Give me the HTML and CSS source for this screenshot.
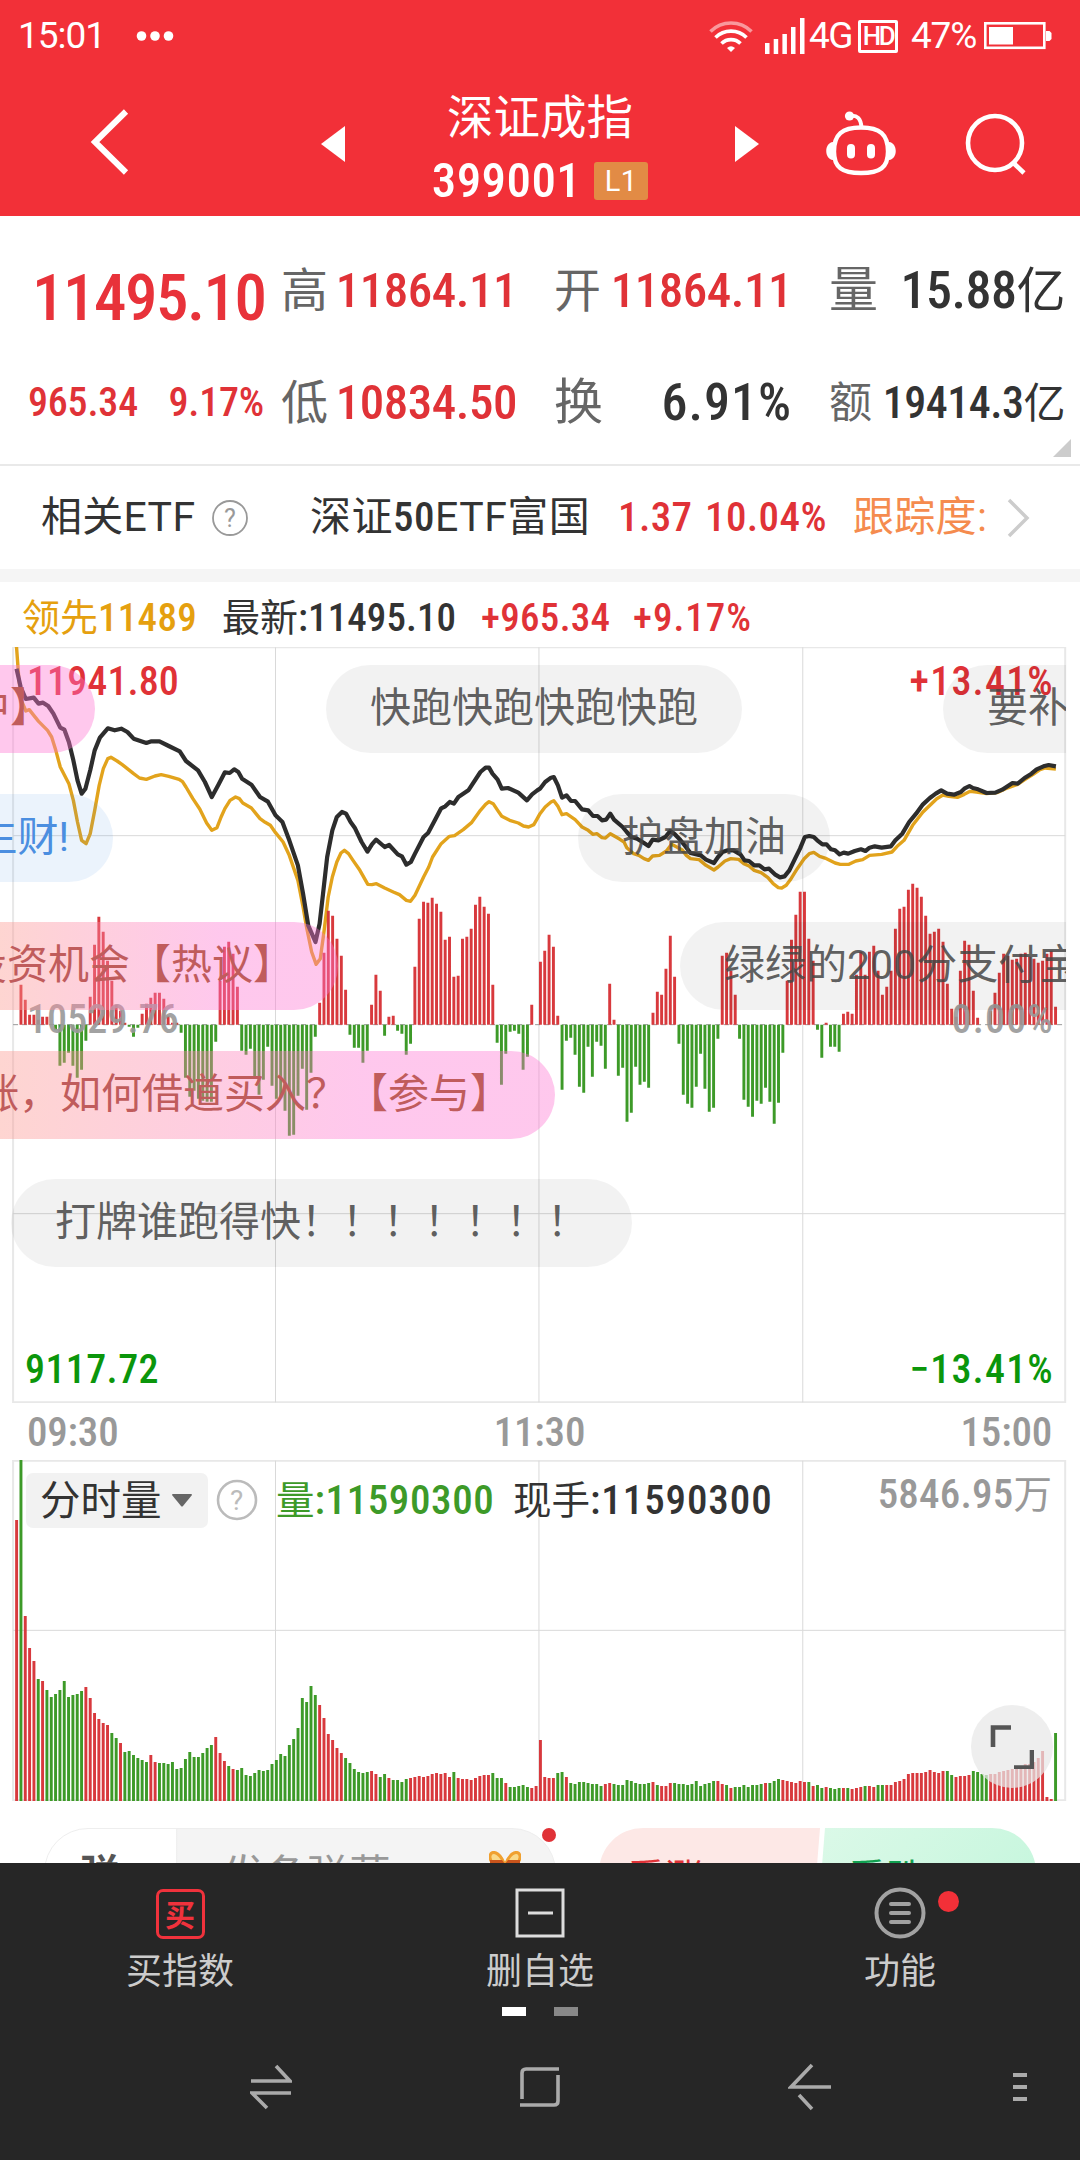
FILE: index.html
```
<!DOCTYPE html>
<html lang="zh-CN">
<head>
<meta charset="utf-8">
<title>深证成指 399001</title>
<link rel="stylesheet" href="styles.css">
</head>
<body>
<header class="header">
  <div class="status">
    <div class="status-side">
      <span class="clock">15:01</span>
      <svg width="38" height="12" viewBox="0 0 38 12" fill="#fff"><circle cx="5.5" cy="6" r="4.8"/><circle cx="19" cy="6" r="4.8"/><circle cx="32.500" cy="6" r="4.800"/></svg>
    </div>
    <div class="status-side status-right">
      <svg class="wifi" width="44" height="36" viewBox="0 0 44 36" fill="none" stroke="#fff" stroke-width="3.6">
        <path d="M1.500 13.500a29 29 0 0 1 41 0" opacity=".5"/>
        <path d="M6.500 19.500a22 22 0 0 1 31 0"/>
        <path d="M12.500 25.500a13.500 13.500 0 0 1 19 0"/>
        <path d="M18 30q4-3.500 8 0l-4 4z" fill="#fff" stroke="none"/>
      </svg>
      <svg class="signal" width="40" height="38" viewBox="0 0 40 38" fill="#fff"><path d="M0 26h4.500v11H0zM8.700 22h4.500v15H8.700zM17.400 17h4.500v20h-4.500zM26 10h4.500v27H26zM35 1h4.500v36H35z"/></svg>
      <span class="net">4G</span>
      <span class="hd">HD</span>
      <span class="percent">47%</span>
      <svg width="68" height="28" viewBox="0 0 68 28"><rect x="1.300" y="1.300" width="59" height="24.500" fill="none" stroke="#fff" stroke-width="2.600"/><path d="M5 5h24v17.500H5zM62 9h3.500l2 2v6l-2 2H62z" fill="#fff"/></svg>
    </div>
  </div>
  <nav class="titlebar">
    <svg class="back" width="40" height="66" viewBox="0 0 40 66" fill="none" stroke="#fff" stroke-width="6"><path d="M36 2.500 5 33l31 30.500"/></svg>
    <svg class="prev" width="24" height="36" viewBox="0 0 24 36"><path d="M24 0v36L0 18z" fill="#fff"/></svg>
    <div class="title">
      <h1>深证成指</h1>
      <div class="code"><span>399001</span><b class="level">L1</b></div>
    </div>
    <svg class="next" width="24" height="36" viewBox="0 0 24 36"><path d="M0 0v36l24-18z" fill="#fff"/></svg>
    <svg class="robot" width="70" height="66" viewBox="0 0 70 66" fill="none" stroke="#fff" stroke-width="4.400">
      <path d="M35 16.500c19 0 27 7 27 24 0 16-8 21.500-27 21.500S8 56.500 8 40.500c0-17 8-24 27-24z"/>
      <path d="M24 5c7-1 11 2 11.500 12" stroke-width="4"/>
      <circle cx="23.500" cy="5" r="4.600" fill="#fff" stroke="none"/>
      <path d="M7 31c-9 1-9 17 0 18zM63 31c9 1 9 17 0 18z" fill="#fff" stroke="none"/>
      <path d="M25 37v6.500M45 37v6.500" stroke-width="8" stroke-linecap="round"/>
    </svg>
    <svg class="search" width="62" height="64" viewBox="0 0 62 64" fill="none" stroke="#fff" stroke-width="4.600"><circle cx="30" cy="31" r="27"/><path d="m47.500 50 11.500 11"/></svg>
  </nav>
</header>

<section class="quote">
  <div class="cell last"><strong>11495.10</strong></div>
  <div class="cell"><label class="l47">高</label><span class="up">11864.11</span></div>
  <div class="cell"><label class="l47">开</label><span class="up">11864.11</span></div>
  <div class="cell"><label class="l49">量</label><span class="v52">15.88<i>亿</i></span></div>
  <div class="cell change"><span class="up">965.34</span><span class="up">9.17%</span></div>
  <div class="cell"><label class="l47">低</label><span class="up">10834.50</span></div>
  <div class="cell"><label class="l49">换</label><span class="v52 wide">6.91%</span></div>
  <div class="cell"><label class="l42">额</label><span class="v44">19414.3<i>亿</i></span></div>
  <svg class="corner" width="18" height="18" viewBox="0 0 18 18"><path d="M18 0v18H0z" fill="#ccc"/></svg>
</section>

<section class="etf">
  <span class="etf-title">相关<em>ETF</em></span>
  <svg class="help" width="38" height="38" viewBox="0 0 38 38"><circle cx="19" cy="19" r="17" fill="none" stroke="#999" stroke-width="1.800"/><text x="19" y="28" text-anchor="middle">?</text></svg>
  <span class="etf-name">深证<b>50</b><em>ETF</em>富国</span>
  <span class="up etf-price">1.37</span>
  <span class="up etf-rate">10.04%</span>
  <span class="track">跟踪度:</span>
  <svg class="chev" width="24" height="42" viewBox="0 0 24 42" fill="none" stroke="#ccc" stroke-width="3.500"><path d="m3 3 18 18L3 39"/></svg>
</section>

<section class="legend">
  <span class="lead"><i>领先</i>11489</span>
  <span class="latest"><i>最新</i>:11495.10</span>
  <span class="up plus">+965.34</span>
  <span class="up rate">+9.17%</span>
</section>

<section class="chart">
  <svg class="plot" id="price" width="1080" height="756" viewBox="0 20 3136 2268" preserveAspectRatio="none">
    <g class="grid">
      <path class="frame" d="M38 21H3093V2286H38z"/>
      <path d="M800 21V2286M1565 21V2286M2331 21V2286M38 586H3093M38 1720H3093"/>
      <path class="zero" d="M38 1153H3093"/>
    </g>
    <polyline class="avg" points="48,20 55,120 62,180 75,212 85,208 98,225 112,243 138,270 150,290 162,330 175,380 200,430 213,480 225,545 237,600 250,610 262,580 275,510 288,435 300,385 313,355 322,351 340,362 355,373 388,400 405,413 425,417 450,407 468,403 490,408 520,417 530,424 540,440 560,475 580,506 600,548 615,570 630,562 642,530 653,505 668,480 684,470 695,475 705,488 730,503 755,535 770,546 785,555 800,577 822,605 840,645 865,720 880,800 890,860 905,935 918,972 930,955 940,880 953,770 965,710 978,665 990,638 1000,630 1012,640 1025,660 1045,690 1068,732 1080,733 1093,730 1117,743 1142,755 1160,763 1180,780 1192,783 1205,765 1230,710 1245,680 1256,650 1281,610 1305,588 1320,586 1345,568 1370,546 1395,510 1410,492 1420,484 1432,490 1445,510 1457,528 1480,540 1505,548 1520,557 1535,560 1550,553 1560,535 1568,520 1583,500 1600,485 1608,481 1620,498 1632,523 1645,520 1670,538 1690,560 1708,570 1722,582 1733,580 1748,592 1758,593 1772,580 1785,588 1800,597 1812,605 1820,622 1840,640 1855,645 1870,655 1883,660 1895,647 1915,645 1935,632 1950,612 1965,620 1980,628 1993,645 2005,655 2030,658 2050,675 2073,689 2085,680 2105,662 2122,655 2145,657 2160,670 2175,677 2190,690 2210,697 2230,712 2245,730 2260,742 2270,743 2283,735 2297,715 2315,685 2335,655 2350,640 2363,636 2380,648 2400,655 2425,668 2440,672 2465,672 2485,662 2505,658 2525,645 2560,642 2590,635 2605,618 2625,600 2650,555 2680,515 2705,490 2720,475 2738,464 2755,468 2780,471 2800,462 2817,453 2835,455 2865,460 2895,457 2920,445 2955,432 2980,415 3000,402 3020,388 3035,383 3066,386"/>
    <polyline class="line" points="48,85 60,140 75,176 98,172 112,190 125,187 140,197 155,220 175,262 187,268 200,305 213,360 225,420 237,460 248,445 262,390 275,330 290,292 313,264 333,270 352,265 370,275 388,295 425,308 440,303 463,303 490,317 522,333 540,362 575,390 595,425 615,470 635,432 653,396 667,398 680,387 692,395 703,415 730,433 755,470 778,484 800,525 820,545 840,600 865,675 880,760 895,855 916,905 928,850 938,760 950,650 965,570 978,530 993,515 1005,520 1018,545 1030,562 1050,605 1067,634 1080,612 1092,598 1117,620 1130,614 1155,642 1167,648 1180,673 1193,665 1205,640 1230,590 1243,578 1260,545 1281,504 1293,498 1306,485 1318,490 1331,470 1360,450 1395,395 1410,382 1420,382 1430,400 1445,418 1457,445 1475,443 1505,457 1530,480 1545,462 1560,450 1568,445 1583,425 1600,412 1608,410 1620,435 1632,472 1645,465 1658,482 1670,482 1690,507 1708,510 1722,527 1735,527 1748,540 1760,538 1772,520 1783,538 1808,560 1820,575 1833,590 1850,595 1870,608 1883,617 1895,598 1912,600 1932,590 1946,572 1958,580 1975,598 1990,618 2005,638 2035,645 2050,658 2073,668 2085,650 2098,635 2113,630 2130,630 2150,642 2162,660 2175,662 2190,675 2205,675 2220,687 2233,685 2250,702 2265,711 2278,708 2292,690 2310,652 2323,625 2337,590 2350,587 2363,590 2373,600 2388,612 2400,612 2413,627 2425,630 2438,642 2450,637 2463,640 2482,632 2500,627 2513,632 2525,622 2540,618 2560,622 2587,618 2600,600 2620,580 2640,545 2660,520 2680,492 2700,473 2717,460 2733,450 2750,460 2770,463 2790,455 2800,445 2815,437 2825,443 2840,447 2865,458 2890,457 2910,448 2940,428 2955,430 2975,413 2995,400 3010,387 3030,378 3045,374 3066,378"/>
    <path class="bar-up"/><path class="bar-down"/>
  </svg>
  <span class="axis up tl">11941.80</span><span class="axis up tr">+13.41%</span>
  <span class="axis mid ml">10529.76</span><span class="axis mid mr">0.00%</span>
  <span class="axis down bl">9117.72</span><span class="axis down br">−13.41%</span>
  <div class="danmaku">
    <p class="pink r1 edge" style="width:95px">中】</p>
    <p class="grey r1" style="left:326px">快跑快跑快跑快跑</p>
    <p class="grey r1" style="left:943px">要补仓</p>
    <p class="blue r2 edge" style="width:113px">生财!</p>
    <p class="grey r2" style="left:578px">护盘加油</p>
    <p class="pink r3 edge" style="width:338px">投资机会【热议】</p>
    <p class="grey r3" style="left:680px">绿绿的200分支付宝</p>
    <p class="pink r4 edge" style="width:555px">涨，如何借道买入？【参与】</p>
    <p class="grey r5" style="left:11px">打牌谁跑得快！！！！！！！</p>
  </div>
</section>

<div class="times"><span>09:30</span><span>11:30</span><span>15:00</span></div>

<section class="volume">
  <svg class="plot" id="volume" width="1080" height="341" viewBox="0 27 3136 1023" preserveAspectRatio="none">
    <g class="grid">
      <path class="frame" d="M38 29H3093V1048H38z"/>
      <path d="M800 29V1048M1565 29V1048M2331 29V1048M38 538H3093"/>
    </g>
    <path class="bar-up"/><path class="bar-down"/>
  </svg>
  <div class="volume-head">
    <span class="select">分时量<svg width="20" height="13" viewBox="0 0 20 13"><path d="M0 1q0-1 1-1h18q1 0 1 1l-9 11q-1 1-2 0z" fill="#666"/></svg></span>
    <svg class="help2" width="42" height="42" viewBox="0 0 42 42"><circle cx="21" cy="21" r="19" fill="none" stroke="#bbb" stroke-width="2.600"/><text x="21" y="31" text-anchor="middle">?</text></svg>
    <span class="vol"><i>量</i>:11590300</span>
    <span class="now"><i>现手</i>:11590300</span>
    <span class="max">5846.95<i>万</i></span>
  </div>
  <button class="expand"><svg width="44" height="44" viewBox="0 0 44 44" fill="none" stroke="#555" stroke-width="4.600"><path d="M21 2.500H3V22M42 25v17.500H24"/></svg></button>
</section>

<section class="social">
  <div class="input"><b>弹</b><span>发条弹幕</span>
    <svg class="gift" width="32" height="34" viewBox="0 0 32 34"><path d="M15 12C10 0 2-1 1 5s6 10 14 8zM17 12C22 0 30-1 31 5s-6 10-14 8z" fill="#f9d98a" stroke="#f0a030" stroke-width="3"/><path d="M1 9h12l3 4 3-4h12v24H1z" fill="#c9541c"/></svg>
    <s class="dot"></s>
  </div>
  <div class="vote"><span class="bull">看涨 <em>710</em></span><span class="bear">看跌 <em>290</em></span></div>
</section>

<footer class="footer">
  <div class="tabs">
    <div class="tab"><span class="ico buy">买</span>买指数</div>
    <div class="tab"><svg class="ico" width="50" height="50" viewBox="0 0 50 50" fill="none" stroke="#ddd" stroke-width="3"><path d="M2 2h46v46H2zM13 25h25"/></svg>删自选</div>
    <div class="tab"><svg class="ico" width="52" height="52" viewBox="0 0 52 52" fill="none" stroke="#a2a2a2" stroke-width="4"><circle cx="26" cy="26" r="23.500"/><path d="M17 17h18M17 26h18M17 35h18" stroke-linecap="round"/></svg>功能<s class="badge"></s></div>
  </div>
  <div class="pager"><s></s><s></s></div>
  <div class="sysnav">
    <svg class="swap" width="42" height="46" viewBox="0 0 42 46"><path d="M1 17h39L26 2M41 29H2l15 15"/></svg>
    <svg class="home" width="42" height="44" viewBox="0 0 42 44"><path d="M40 4H7Q3 4 3 8v26M39 10v26q0 4-4 4H1"/></svg>
    <svg class="return" width="44" height="48" viewBox="0 0 44 48"><path d="M43 24H3L24 2M11 32l13 14"/></svg>
    <svg class="more" width="16" height="30" viewBox="0 0 16 30"><path d="M1 3h14M1 15h14M1 27h14"/></svg>
  </div>
</footer>
<script src="charts.js"></script>
</body>
</html>
```
FILE: styles.css
```
* { box-sizing: border-box; margin: 0; }
i, em, s { font-style: normal; text-decoration: none; }
body {
  width: 1080px; height: 2160px; overflow: hidden; background: #fff; color: #333;
  font: 500 40px "Roboto Condensed", "Noto Sans CJK SC", sans-serif;
  display: flex; flex-direction: column;
}
svg { display: block; flex: none; }
span, label { white-space: nowrap; }
.up { color: #e03237; }
em { font-family: Roboto, sans-serif; font-weight: 400; }

.header { height: 216px; background: #f23038; color: #fff; flex: none; }
.status { height: 72px; display: flex; justify-content: space-between; padding: 0 28px 0 18px; font: 400 37px/76px Roboto, sans-serif; }
.status-side { display: flex; align-items: center; gap: 30px; }
.clock { width: 88px; letter-spacing: -1px; }
.status-right { gap: 0; }
.wifi { margin-right: 12px; }
.signal { margin-right: 4px; }
.net { width: 49px; letter-spacing: -1.500px; }
.hd { width: 40px; height: 33px; border: 3px solid #fff; border-radius: 2px; font: 500 26px/27px Roboto, sans-serif; letter-spacing: -2.500px; text-align: center; margin-right: 13px; }
.percent { width: 73px; letter-spacing: -1.200px; }
.titlebar { height: 144px; display: flex; align-items: center; padding-left: 90px; }
.back { margin-top: -4px; margin-right: 191px; }
.prev { margin-right: 60px; }
.title { width: 270px; text-align: center; align-self: flex-start; margin-top: 12px; }
.title h1 { font: 400 46.500px/60px "Noto Sans CJK SC", sans-serif; }
.code { display: flex; justify-content: center; align-items: center; gap: 13px; margin-top: 3px; font-size: 49px; line-height: 68px; letter-spacing: .4px; }
.level { width: 54px; height: 38px; border-radius: 3px; background: #e28b45; font: 400 29px/38px Roboto, sans-serif; }
.next { margin-left: 60px; margin-right: 67px; }
.robot { margin-right: 69px; }

.quote { flex: none; height: 250px; padding: 19px 15px 0 28px; border-bottom: 2px solid #e9e9e9; position: relative; display: grid; grid-template-columns: 253px 273px 275px 236px; grid-template-rows: 112px 112px; }
.cell { display: flex; justify-content: space-between; line-height: 112px; font-size: 49px; letter-spacing: -.5px; }
.cell:nth-child(4n+1) { padding-right: 17px; }
.cell:nth-child(4n+2) { padding-right: 37px; }
.cell:nth-child(4n+3) { padding-right: 37px; }
.cell label, .cell i { font-family: "Roboto", "Noto Sans CJK SC", sans-serif; font-weight: 400; color: #666; }
.cell i { color: #333; }
.last { color: #e8323a; font-size: 65px; line-height: 126px; padding-left: 4px; letter-spacing: -1.500px; }
.last strong { font-weight: 500; }
.change { font-size: 40px; letter-spacing: -.2px; }
.l47 { font-size: 47px; } .l49 { font-size: 49px; } .l42 { font-size: 43px; }
.v52 { font-size: 52px; } .v52 i { font-size: 49px; }
.wide { letter-spacing: 1px; }
.v44 { font-size: 44px; } .v44 i { font-size: 42px; }
.corner { position: absolute; right: 9px; bottom: 7px; }

.etf { flex: none; height: 116px; border-bottom: 13px solid #f5f5f5; display: flex; align-items: center; padding-left: 41px; font-size: 41px; line-height: 105px; font-weight: 400; letter-spacing: .3px; }
.etf-title { width: 170px; }
.help { margin-right: 61px; }
.help text { font: 400 25px Roboto; fill: #999; }
.etf-name { width: 308px; letter-spacing: .5px; }
.etf-name b { font-weight: 500; }
.etf .up { font-weight: 500; letter-spacing: .4px; }
.etf-price { width: 87px; } .etf-rate { width: 148px; }
.track { color: #f58b4e; width: 153px; }

.legend { flex: none; height: 65px; display: flex; padding-left: 22px; font-size: 39px; line-height: 72px; letter-spacing: .3px; }
.legend i { font-weight: 400; font-size: 38px; letter-spacing: 0; }
.lead { color: #e5a00f; width: 200px; }
.latest { width: 259px; letter-spacing: .1px; }
.plus { width: 152px; }
.rate { letter-spacing: 1px; }

.chart { flex: none; height: 756px; position: relative; }
.grid path { fill: none; stroke: #d9d9d9; stroke-width: 1; vector-effect: non-scaling-stroke; }
.grid .frame { stroke: #e8e8e8; stroke-width: 2; }
.grid .zero { stroke: #999; stroke-dasharray: 5 4; }
.avg, .line { fill: none; vector-effect: non-scaling-stroke; stroke-linejoin: round; }
.avg { stroke: #e2a31c; stroke-width: 3.400; }
.line { stroke: #2d2d2d; stroke-width: 4.200; }
.bar-up { fill: #d8393d; } .bar-down { fill: #3d9a28; }
.axis { position: absolute; font-size: 40px; line-height: 48px; letter-spacing: .1px; }
.tl, .tr { top: 11px; } .ml, .mr { top: 349px; } .bl, .br { top: 699px; }
.tl, .ml { left: 27px; } .bl { left: 25px; letter-spacing: .4px; } .tr, .mr, .br { right: 26px; letter-spacing: 1.200px; }
.mid { color: #999; opacity: .9; } .down { color: #0b960b; }
.danmaku { position: absolute; left: 0; top: 0; width: 1066px; height: 100%; overflow: hidden; font: 400 41px/87px Roboto, "Noto Sans CJK SC", sans-serif; }
.danmaku p { position: absolute; height: 88px; border-radius: 44px; padding: 0 44px; white-space: nowrap; }
.danmaku .edge { left: 0; border-radius: 0 44px 44px 0; display: flex; justify-content: flex-end; overflow: hidden; }
.grey { background: rgba(0, 0, 0, .052); color: rgba(70, 70, 70, .85); }
.blue { background: rgba(60, 140, 230, .1); color: #4b8ee0; }
.pink { background: linear-gradient(90deg, rgba(252, 150, 140, .4), rgba(254, 117, 210, .4) 65%); color: #c05c5c; }
.pink.r1 { background: rgba(254, 117, 210, .4); }
.r1 { top: 18px; } .r2 { top: 146.500px; } .r3 { top: 275px; } .r4 { top: 404px; } .r5 { top: 532px; }

.times { flex: none; height: 57px; display: grid; grid-template-columns: 1fr auto 1fr; padding: 0 28px 0 27px; color: #999; font-size: 41px; line-height: 58px; letter-spacing: -.2px; }
.times span:last-child { text-align: right; }

.volume { flex: none; height: 341px; position: relative; }
.volume-head { position: absolute; inset: 0 28px auto 26px; display: flex; padding-top: 13px; font-size: 41px; line-height: 54px; letter-spacing: .6px; }
.volume-head i { font-weight: 400; letter-spacing: 0; font-size: 38.500px; }
.select { display: flex; align-items: center; gap: 10px; width: 182px; height: 55px; padding-left: 14px; background: #f2f2f2; border-radius: 7px; font-weight: 400; font-size: 40.500px; letter-spacing: 0; }
.help2 { margin: 6px 18px 0 8px; }
.help2 text { font: 400 28px Roboto; fill: #bbb; }
.vol { color: #3d9a28; width: 237px; }
.now { letter-spacing: .9px; }
.max { margin-left: auto; color: #999; line-height: 42px; letter-spacing: .2px; }
.expand { position: absolute; left: 971px; top: 245px; width: 82px; height: 83px; border: 0; padding: 0; border-radius: 50%; background: rgba(232, 232, 232, .72); display: grid; place-items: center; }

.social { flex: none; height: 62px; overflow: hidden; padding: 27px 44px 0; display: flex; justify-content: space-between; }
.input { width: 512px; height: 88px; border: 1px solid #eee; border-radius: 44px; display: flex; position: relative; background: linear-gradient(90deg, #fff 131px, #eee 131px, #f4f4f4 133px); font: 400 42px/86px "Noto Sans CJK SC"; color: #999; }
.input b { width: 178px; padding-left: 35px; color: #555; font-size: 40px; font-weight: 700; line-height: 84px; }
.gift { position: absolute; left: 444px; top: 22px; }
.dot { position: absolute; left: 497px; top: -1px; width: 14px; height: 14px; border-radius: 50%; background: #e03237; }
.vote { width: 437px; height: 88px; border-radius: 44px; overflow: hidden; display: flex; font: 400 38px/94px "Noto Sans CJK SC"; position: relative; background: #fff; }
.vote span { clip-path: polygon(0 0, 100% 0, calc(100% - 7px) 100%, 0 100%); }
.vote em { font: 500 38px "Roboto Condensed"; margin-left: 4px; }
.bull { width: 221px; padding-left: 28px; background: #fde8e6; color: #e03237; }
.vote .bear { flex: 1; margin-left: -2px; padding-left: 30px; background: linear-gradient(135deg, #dbf9e8, #c4f6dc); color: #10a050; clip-path: polygon(7px 0, 100% 0, 100% 100%, 0 100%); }

.footer { flex: none; height: 297px; background: #262626; color: #ccc; }
.tabs { height: 144px; display: grid; grid-template-columns: repeat(3, 1fr); font: 400 36px/52px "Noto Sans CJK SC", sans-serif; }
.tab { display: flex; flex-direction: column; align-items: center; padding-top: 24px; position: relative; }
.ico { height: 52px; margin-bottom: 3px; }
.buy { width: 49px; height: 50px; margin: 2px 0 3px; border: 3px solid #f0323c; border-radius: 7px; color: #f0323c; font-size: 30px; line-height: 42px; text-align: center; font-weight: 700; display: flex; justify-content: center; }
.badge { position: absolute; left: 218px; top: 28px; width: 21px; height: 21px; border-radius: 50%; background: #f23038; }
.pager { display: flex; justify-content: center; gap: 28px; }
.pager s { width: 24px; height: 9px; background: #fff; }
.pager s + s { background: #888; }
.sysnav { display: grid; grid-template-columns: 250px 269px 269px 224px 16px; align-items: center; height: 142px; }
.sysnav svg { fill: none; stroke: #aaa; stroke-width: 3.600; }
.sysnav .swap { grid-column: 2; }
.sysnav .more { stroke-width: 4; }
```
FILE: charts.js
```
// One value per trading minute; the plots share a 12.57-unit column pitch.
const STEP = 12.57, X0 = 44, W = 8.5;

const momentum = [0,40,25,10,10,5,8,8,0,-5,-41,-38,-28,-41,-53,-45,-16,28,80,108,93,64,44,20,14,2,-2,-12,-3,11,21,27,32,32,26,9,2,2,-8,-53,
-72,-66,-74,-76,-77,-77,-17,44,78,83,71,38,-26,-30,-24,-52,-70,-55,-22,-61,-74,-72,-86,-111,-110,-71,-44,-85,-48,-12,22,72,114,109,86,69,35,-10,-23,-23,
-38,-26,20,50,34,-11,8,9,-6,-9,-30,-19,58,106,123,122,127,121,113,85,88,48,49,86,88,96,120,128,118,111,40,-18,-60,-29,-7,-6,-9,-45,-32,20,
0,63,74,90,78,9,-65,-16,-13,-30,-62,-68,-22,-52,-17,-21,-44,41,5,-51,-43,-97,-88,-42,-60,-57,-63,12,33,30,56,89,48,-19,-70,-79,-83,-62,-29,-64,
-87,-83,-14,69,72,54,30,-14,-75,-82,-92,-76,-79,-63,-77,-99,-78,-28,44,85,110,133,133,86,64,-5,-33,2,-22,-22,-27,11,13,11,50,73,50,73,79,54,
30,38,54,96,116,118,135,141,137,128,109,91,93,96,83,41,16,8,54,84,80,34,7,0,0,14,32,52,71,69,65,66,71,72,68,66,62,64,71,74,18];

const volume = [281,-341,185,153,140,-122,120,-111,-104,-107,-111,-120,-104,-106,-107,-110,114,103,88,82,78,76,-68,-63,58,-49,-50,-46,-43,-41,-39,46,39,-38,-38,-37,-39,-32,-33,-42,
-49,-44,-44,-48,-53,-56,64,48,40,-35,32,-31,-33,-26,-25,-28,-31,-30,-31,-37,-41,-47,-45,-56,-62,-73,-103,-99,-115,-106,96,83,67,61,53,48,-43,-38,-32,-29,
-28,-29,30,27,-24,-27,23,-21,-21,-19,-22,23,24,25,24,25,27,28,27,28,24,-29,23,22,22,21,23,25,26,26,-28,-23,-23,18,-14,-14,-15,-16,-14,13,
15,61,24,23,23,-28,-29,24,-18,-17,-19,-19,-18,-17,-17,-15,17,18,-17,-16,-16,-21,-20,-18,-17,-17,-18,19,-16,15,15,18,-18,-17,-17,-16,-17,-20,-15,-17,
-18,-20,20,17,-16,13,-14,-14,-16,-14,-16,-16,-17,18,-18,-20,-22,21,20,19,18,20,19,-19,15,-16,-13,14,-13,-12,-13,13,-13,12,13,14,-15,15,14,-16,
-16,16,16,19,20,22,27,28,28,28,29,31,29,28,30,-30,-26,24,25,25,26,-30,-29,-27,-26,27,27,29,30,31,32,34,35,37,37,39,43,50,4,2,-68];

function draw(id, values, base, flip) {
  let up = '', down = '';
  values.forEach((v, i) => {
    const h = (flip ? v : Math.abs(v)) * 3;
    const d = `M${(X0 + i * STEP).toFixed(1)} ${base}h${W}v${-h}h${-W}z`;
    if (v > 0) up += d; else if (v < 0) down += d;
  });
  const svg = document.getElementById(id);
  svg.querySelector('.bar-up').setAttribute('d', up);
  svg.querySelector('.bar-down').setAttribute('d', down);
}
draw('price', momentum, 1153, true);
draw('volume', volume, 1050, false);
```
